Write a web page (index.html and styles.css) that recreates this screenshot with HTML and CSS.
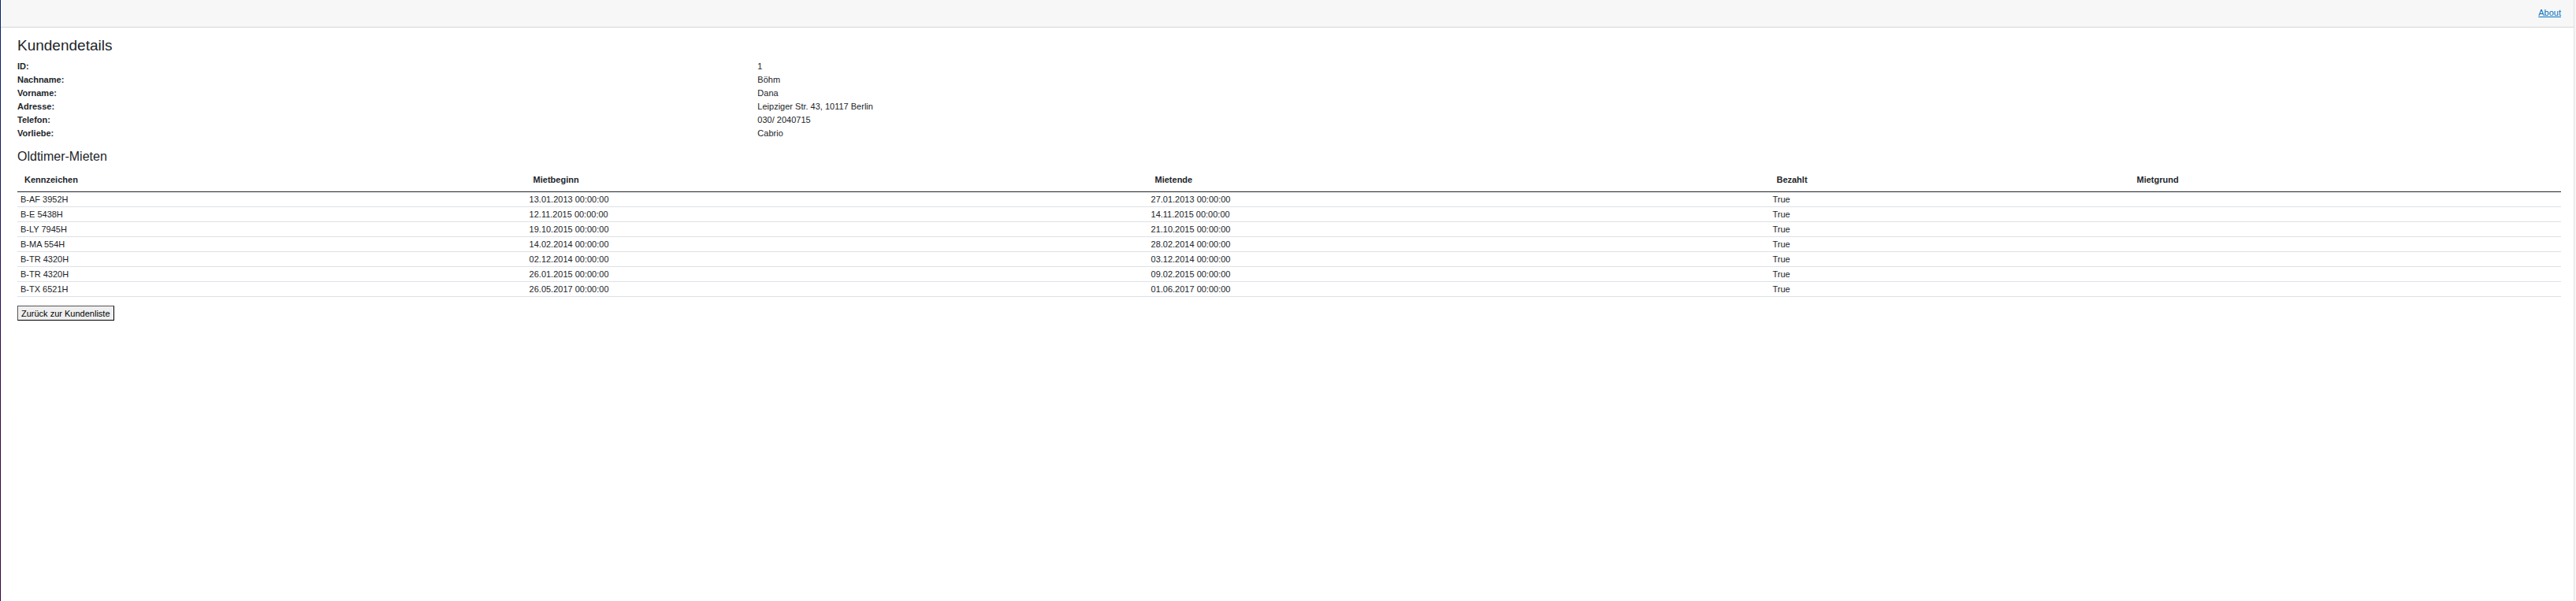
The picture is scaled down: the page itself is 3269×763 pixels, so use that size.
FILE: index.html
```html
<!DOCTYPE html>
<html lang="de">
<head>
<meta charset="utf-8">
<title>Kundendetails</title>
<link rel="stylesheet" href="styles.css">
</head>
<body>
<div class="page">
  <div class="sidebar"></div>
  <main class="main">
    <header class="top-row"><a href="#about">About</a></header>
    <article class="content">
      <h1 class="title">Kundendetails</h1>
      <dl class="details">
        <dt>ID:</dt><dd>1</dd>
        <dt>Nachname:</dt><dd>Böhm</dd>
        <dt>Vorname:</dt><dd>Dana</dd>
        <dt>Adresse:</dt><dd>Leipziger Str. 43, 10117 Berlin</dd>
        <dt>Telefon:</dt><dd>030/ 2040715</dd>
        <dt>Vorliebe:</dt><dd>Cabrio</dd>
      </dl>
      <h2 class="subtitle">Oldtimer-Mieten</h2>
      <table class="rentals">
        <colgroup><col class="col-plate"><col class="col-date"><col class="col-date"><col class="col-paid"><col></colgroup>
        <thead>
          <tr><th scope="col">Kennzeichen</th><th scope="col">Mietbeginn</th><th scope="col">Mietende</th><th scope="col">Bezahlt</th><th scope="col">Mietgrund</th></tr>
        </thead>
        <tbody>
          <tr><td>B-AF 3952H</td><td>13.01.2013 00:00:00</td><td>27.01.2013 00:00:00</td><td>True</td><td></td></tr>
          <tr><td>B-E 5438H</td><td>12.11.2015 00:00:00</td><td>14.11.2015 00:00:00</td><td>True</td><td></td></tr>
          <tr><td>B-LY 7945H</td><td>19.10.2015 00:00:00</td><td>21.10.2015 00:00:00</td><td>True</td><td></td></tr>
          <tr><td>B-MA 554H</td><td>14.02.2014 00:00:00</td><td>28.02.2014 00:00:00</td><td>True</td><td></td></tr>
          <tr><td>B-TR 4320H</td><td>02.12.2014 00:00:00</td><td>03.12.2014 00:00:00</td><td>True</td><td></td></tr>
          <tr><td>B-TR 4320H</td><td>26.01.2015 00:00:00</td><td>09.02.2015 00:00:00</td><td>True</td><td></td></tr>
          <tr><td>B-TX 6521H</td><td>26.05.2017 00:00:00</td><td>01.06.2017 00:00:00</td><td>True</td><td></td></tr>
        </tbody>
      </table>
      <button class="back" type="button">Zurück zur Kundenliste</button>
    </article>
  </main>
  <div class="edge"></div>
</div>
</body>
</html>
```
FILE: styles.css
```css
* { box-sizing: border-box; }

body {
  margin: 0;
  background: #f6f6f6;
  color: #212529;
  font-family: "Liberation Sans", Arial, sans-serif;
  font-size: 11px;
  line-height: 17px;
}

.page { display: flex; min-height: 100vh; }

.sidebar {
  width: 1px;
  background: linear-gradient(180deg, #052767 0%, #3a0647 70%);
}

.main {
  flex: 1;
  background: #fff;
  border-top-right-radius: 5px;
  overflow: hidden;
}

.edge {
  width: 3px;
  border-left: 1px solid #e2e2e2;
}

.top-row {
  display: flex;
  align-items: center;
  justify-content: flex-end;
  height: 35px;
  padding: 0 16px 2px 21px;
  background: #f7f7f7;
  border-bottom: 1px solid #d6d5d5;
}

.top-row a { color: #0071c1; }

.content { padding: 12px 16px 16px 21px; }

.title, .subtitle { margin: 0; font-weight: 400; }
.title { font-size: 19px; line-height: 22px; }
.subtitle { font-size: 16px; line-height: 18px; }

.details {
  display: grid;
  grid-template-columns: 29.1% 1fr;
  margin: 7px 0 12px;
}

.details dt { font-weight: 700; }
.details dd { margin: 0; }

.rentals {
  width: 100%;
  margin: 4px 0 11px;
  table-layout: fixed;
  border-collapse: separate;
  border-spacing: 0;
  line-height: 12px;
  text-align: left;
}

.rentals th {
  padding: 10px 9px 9px;
  border-bottom: 1px solid #212529;
}

.rentals td {
  height: 19px;
  padding: 3px 4px;
  border-bottom: 1px solid #dee2e6;
}

.col-plate { width: 20%; }
.col-date { width: 24.44%; }
.col-paid { width: 14.16%; }

.back {
  display: block;
  padding: 3px 4px 2px;
  background: #efefef;
  border: 1px solid #000;
  border-top-color: #555;
  border-left-color: #555;
  border-radius: 0;
  color: #000;
  font: inherit;
  line-height: 12px;
}
```
